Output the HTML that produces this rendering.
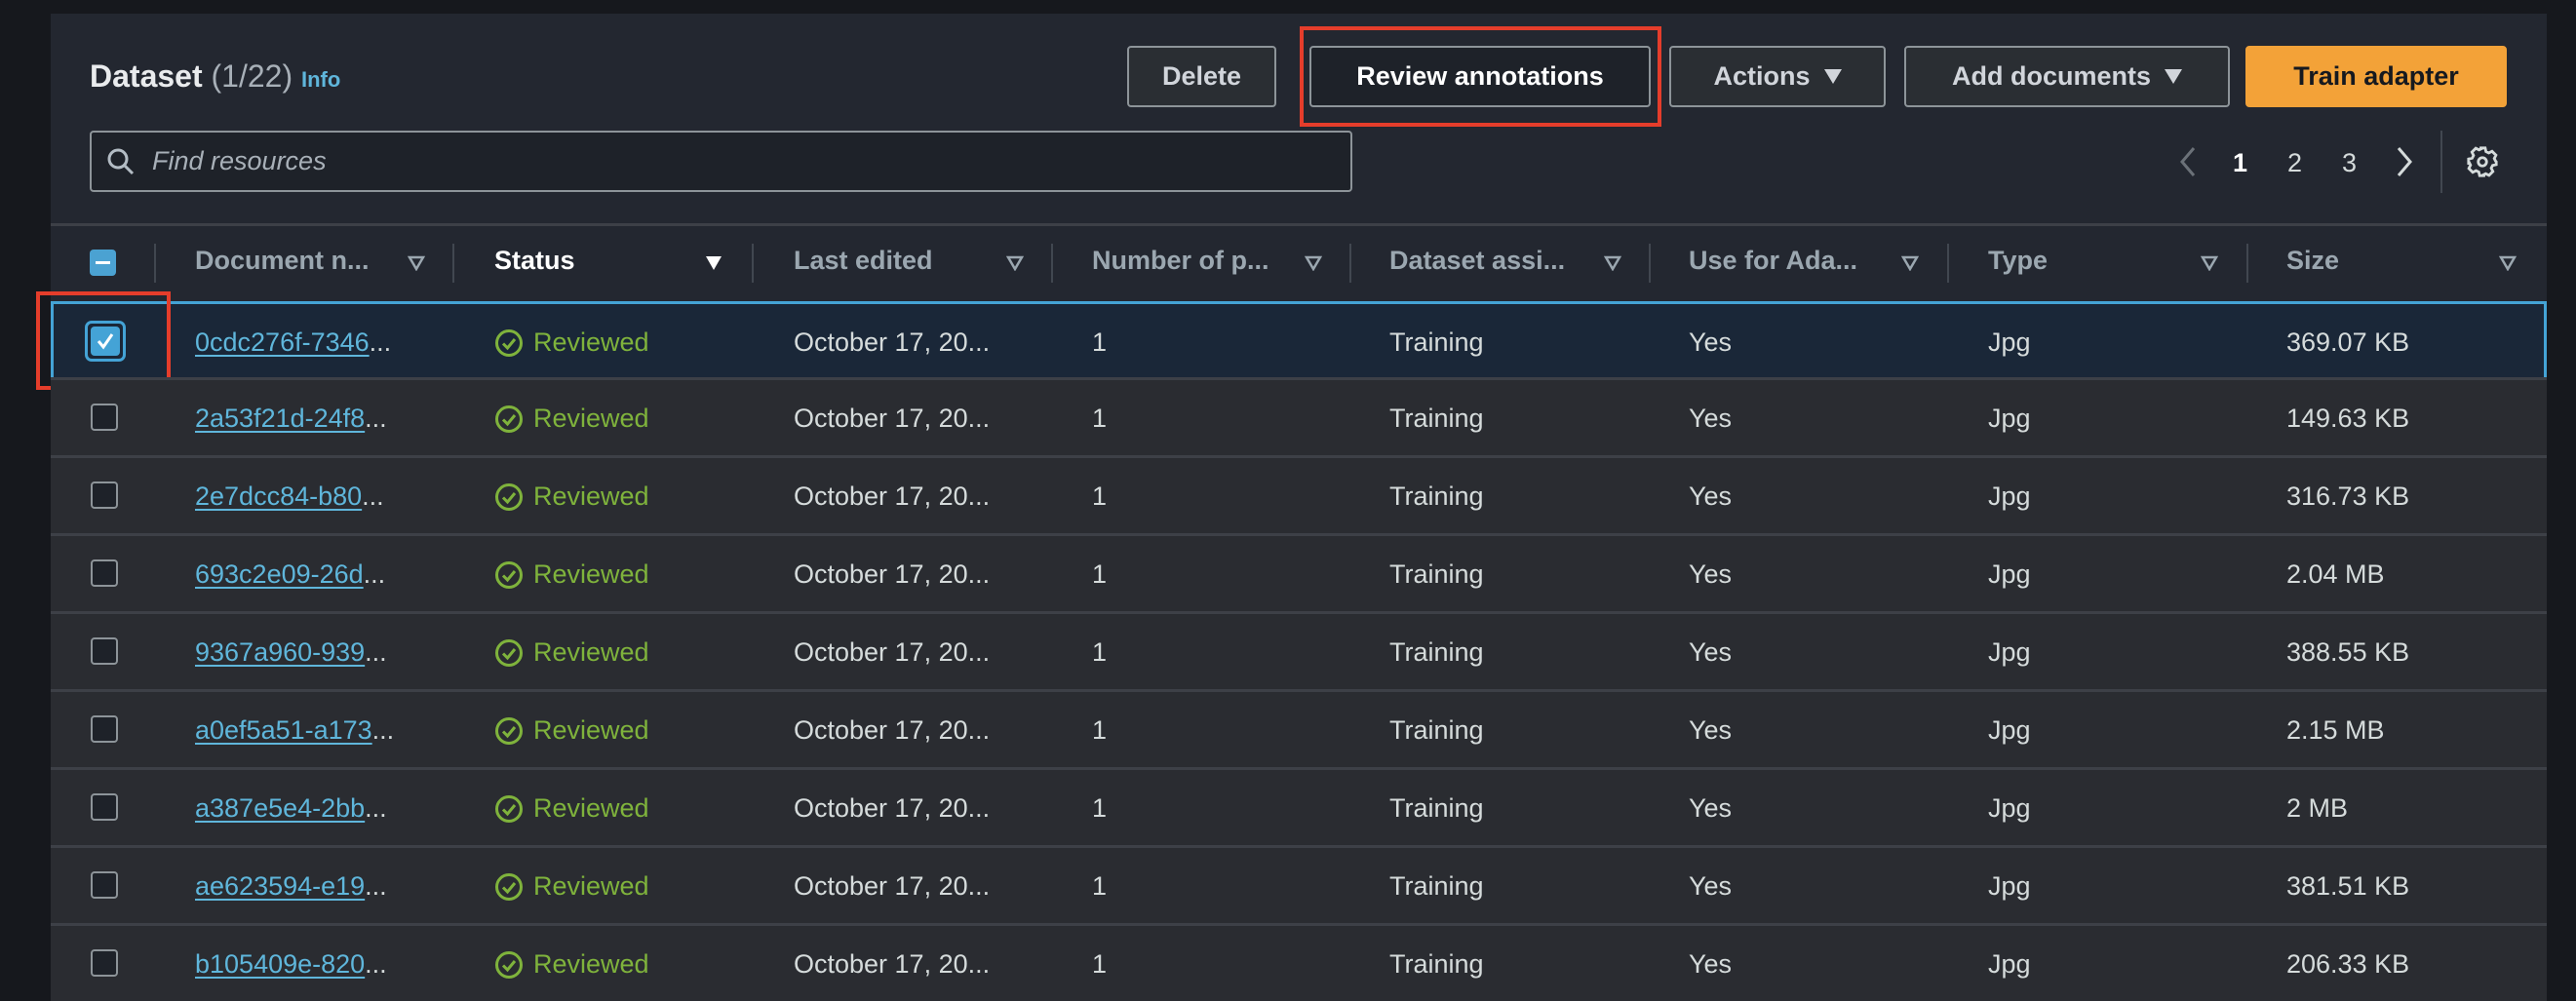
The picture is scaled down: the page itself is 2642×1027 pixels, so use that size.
<!DOCTYPE html>
<html><head><meta charset="utf-8"><style>
*{margin:0;padding:0;box-sizing:border-box}
body{width:2642px;height:1002px;overflow:hidden;background:#16181d;font-family:"Liberation Sans",sans-serif;position:relative;color:#d1d5db}
.panel{position:absolute;left:52px;top:14px;width:2560px;height:1000px;background:#232730}
.abs{position:absolute}
.btn{position:absolute;top:47px;height:63px;border:2px solid #8d9499;border-radius:4px;background:#2a2e33;color:#d1d5db;font-weight:bold;font-size:27px;display:flex;align-items:center;justify-content:center;gap:14px}
.tri{width:0;height:0;border-left:9px solid transparent;border-right:9px solid transparent;border-top:15px solid #d1d5db}
.hdr{position:absolute;top:252px;font-size:27px;font-weight:bold;color:#9ba7b0}
.sep{position:absolute;top:250px;width:2px;height:40px;background:#414750}
.sort{position:absolute;top:262px}
.row{position:absolute;left:52px;width:2560px;height:80px;background:#2a2c31;border-top:3px solid #3d4047}
.cell{position:absolute;top:24px;font-size:27px;color:#d5dbdb;white-space:nowrap}
.cb{position:absolute;left:41px;top:24px;width:28px;height:28px;border:2px solid #8d9499;border-radius:4px;background:#1e2229}
.link{color:#5fb6db;text-decoration:underline;text-underline-offset:4px}
.link span{color:#d5dbdb;text-decoration:none;display:inline-block}
.st{color:#7fb33c;display:flex;align-items:center;gap:10px}
.red{position:absolute;border:4px solid #e53d2b}
</style></head><body>
<div class="panel"></div>
<div class="abs" style="left:92px;top:60px;font-size:32px;font-weight:bold;color:#e9ebed">Dataset <span style="font-weight:normal;color:#a8b0b8">(1/22)</span> <span style="font-size:22px;color:#5fb6db">Info</span></div>

<div class="btn" style="left:1156px;width:153px">Delete</div>
<div class="btn" style="left:1343px;width:350px;background:#1e2229;color:#fff">Review annotations</div>
<div class="red" style="left:1333px;top:27px;width:371px;height:103px"></div>
<div class="btn" style="left:1712px;width:222px">Actions <span class="tri"></span></div>
<div class="btn" style="left:1953px;width:334px">Add documents <span class="tri"></span></div>
<div class="btn" style="left:2303px;width:268px;background:#f3a238;border-color:#f3a238;color:#16191f">Train adapter</div>

<div class="abs" style="left:92px;top:134px;width:1295px;height:63px;border:2px solid #8d9499;border-radius:4px;background:#1e2229"></div>
<svg class="abs" style="left:108px;top:150px" width="32" height="32" viewBox="0 0 32 32"><circle cx="13" cy="13" r="9" fill="none" stroke="#b3bcc4" stroke-width="3"/><path d="M20 20L28 28" stroke="#b3bcc4" stroke-width="3"/></svg>
<div class="abs" style="left:156px;top:150px;font-size:27px;font-style:italic;color:#a8b0b8">Find resources</div>

<svg class="abs" style="left:2232px;top:148px" width="24" height="36" viewBox="0 0 24 36"><path d="M18 4L6 18L18 32" fill="none" stroke="#6b7178" stroke-width="3"/></svg>
<div class="abs" style="left:2290px;top:152px;font-size:27px;font-weight:bold;color:#fff">1</div>
<div class="abs" style="left:2346px;top:152px;font-size:27px;color:#d5dbdb">2</div>
<div class="abs" style="left:2402px;top:152px;font-size:27px;color:#d5dbdb">3</div>
<svg class="abs" style="left:2454px;top:148px" width="24" height="36" viewBox="0 0 24 36"><path d="M6 4L18 18L6 32" fill="none" stroke="#d5dbdb" stroke-width="3"/></svg>
<div class="abs" style="left:2503px;top:134px;width:2px;height:64px;background:#414750"></div>
<svg class="abs" style="left:2529px;top:149px" width="34" height="34" viewBox="0 0 24 24"><path fill="none" stroke="#d5dbdb" stroke-width="2" d="M10 2h4l.6 2.6 2 1 2.4-1.2 2.8 2.8-1.2 2.4 1 2L22 12v0l0 2-2.6.6-1 2 1.2 2.4-2.8 2.8-2.4-1.2-2 1L14 22h-4l-.6-2.6-2-1-2.4 1.2-2.8-2.8 1.2-2.4-1-2L2 14v-4l2.6-.6 1-2L4.4 5 7.2 2.2l2.4 1.2 2-1z"/><circle cx="12" cy="12" r="3" fill="none" stroke="#d5dbdb" stroke-width="2"/></svg>

<div class="abs" style="left:52px;top:229px;width:2560px;height:3px;background:#3d4047"></div>
<div class="abs" style="left:92px;top:256px;width:27px;height:27px;background:#4ba2d2;border-radius:4px"><div style="position:absolute;left:6px;top:12px;width:15px;height:3px;background:#fff"></div></div>

<div class="sep" style="left:158px"></div><div class="sep" style="left:464px"></div><div class="sep" style="left:771px"></div><div class="sep" style="left:1078px"></div><div class="sep" style="left:1384px"></div><div class="sep" style="left:1691px"></div><div class="sep" style="left:1997px"></div><div class="sep" style="left:2304px"></div>
<div class="hdr" style="left:200px">Document n...</div>
<div class="hdr" style="left:507px;color:#fff">Status</div>
<div class="hdr" style="left:814px">Last edited</div>
<div class="hdr" style="left:1120px">Number of p...</div>
<div class="hdr" style="left:1425px">Dataset assi...</div>
<div class="hdr" style="left:1732px">Use for Ada...</div>
<div class="hdr" style="left:2039px">Type</div>
<div class="hdr" style="left:2345px">Size</div>
<svg class="sort" style="left:418px" width="18" height="16"><path d="M2 2H16L9 14Z" fill="none" stroke="#9ba7b0" stroke-width="2.5"/></svg>
<svg class="sort" style="left:723px" width="18" height="16"><path d="M1 1H17L9 15Z" fill="#fff"/></svg>
<svg class="sort" style="left:1032px" width="18" height="16"><path d="M2 2H16L9 14Z" fill="none" stroke="#9ba7b0" stroke-width="2.5"/></svg>
<svg class="sort" style="left:1338px" width="18" height="16"><path d="M2 2H16L9 14Z" fill="none" stroke="#9ba7b0" stroke-width="2.5"/></svg>
<svg class="sort" style="left:1645px" width="18" height="16"><path d="M2 2H16L9 14Z" fill="none" stroke="#9ba7b0" stroke-width="2.5"/></svg>
<svg class="sort" style="left:1950px" width="18" height="16"><path d="M2 2H16L9 14Z" fill="none" stroke="#9ba7b0" stroke-width="2.5"/></svg>
<svg class="sort" style="left:2257px" width="18" height="16"><path d="M2 2H16L9 14Z" fill="none" stroke="#9ba7b0" stroke-width="2.5"/></svg>
<svg class="sort" style="left:2563px" width="18" height="16"><path d="M2 2H16L9 14Z" fill="none" stroke="#9ba7b0" stroke-width="2.5"/></svg>

<!-- selected row -->
<div class="row" style="top:309px;height:81px;background:#1a2738;border:3px solid #44a3d6">
 <div style="position:absolute;left:32px;top:17px;width:42px;height:42px;border:3px solid #44a3d6;border-radius:7px"></div>
 <div style="position:absolute;left:38px;top:23px;width:30px;height:30px;background:#44a3d6;border-radius:4px"></div>
 <svg style="position:absolute;left:40px;top:25px" width="26" height="26" viewBox="0 0 26 26"><path d="M6 13L11 19L20 6" fill="none" stroke="#fff" stroke-width="3"/></svg>
</div>
<div class="red" style="left:37px;top:299px;width:138px;height:101px"></div>

<div id="rows"></div>
<script>
const data=[
["0cdc276f-7346","369.07 KB"],["2a53f21d-24f8","149.63 KB"],["2e7dcc84-b80","316.73 KB"],["693c2e09-26d","2.04 MB"],["9367a960-939","388.55 KB"],["a0ef5a51-a173","2.15 MB"],["a387e5e4-2bb","2 MB"],["ae623594-e19","381.51 KB"],["b105409e-820","206.33 KB"]];
let h="";
data.forEach((d,i)=>{
 const top=i==0?309:389+80*(i-1)-2;
 const sel=i==0;
 h+=`<div class="row" style="top:${top}px;${sel?'background:transparent;border:none;':''}">`+
 (sel?'':'<div class="cb"></div>')+
 `<div class="cell" style="left:148px;${sel?'top:27px':''}"><span class="link">${d[0]}</span><span style="color:#d5dbdb">...</span></div>`+
 `<div class="cell st" style="left:455px;${sel?'top:27px':''}"><svg width="30" height="30" viewBox="0 0 30 30"><circle cx="15" cy="15" r="12.5" fill="none" stroke="#7fb33c" stroke-width="3"/><path d="M9 15.5L13.5 20L21 11" fill="none" stroke="#7fb33c" stroke-width="3"/></svg>Reviewed</div>`+
 `<div class="cell" style="left:762px;${sel?'top:27px':''}">October 17, 20...</div>`+
 `<div class="cell" style="left:1068px;${sel?'top:27px':''}">1</div>`+
 `<div class="cell" style="left:1373px;${sel?'top:27px':''}">Training</div>`+
 `<div class="cell" style="left:1680px;${sel?'top:27px':''}">Yes</div>`+
 `<div class="cell" style="left:1987px;${sel?'top:27px':''}">Jpg</div>`+
 `<div class="cell" style="left:2293px;${sel?'top:27px':''}">${d[1]}</div></div>`;
});
document.getElementById('rows').innerHTML=h;
</script>
</body></html>
